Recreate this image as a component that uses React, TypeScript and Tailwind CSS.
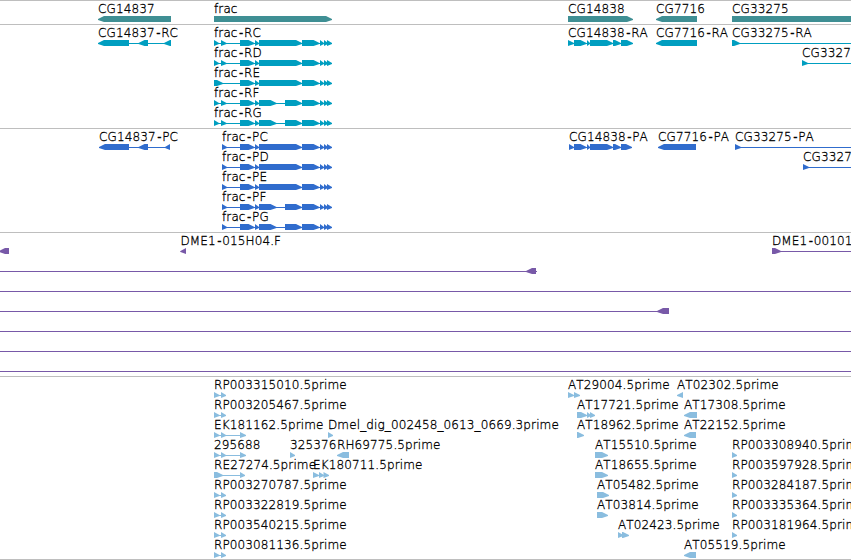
import React from 'react';

type Direction = 'left' | 'right';

interface Feature {
  label?: string;
  dir: Direction;
  // [start, end] of each block
  blocks: number[][];
  line?: number[];
}

interface Track {
  name: string;
  color: string;
  rows: Feature[][];
}

const WIDTH = 851;

const gene = (label: string, dir: Direction, blocks: number[][], line?: number[]): Feature => ({
  label,
  dir,
  blocks,
  line,
});

const connector = (start: number, end: number, blocks: number[][] = []): Feature => ({
  dir: 'left',
  blocks,
  line: [start, end],
});

const fracTail = [[302, 319.5], [320, 324], [324, 328], [327, 332]];
const fracLong = [[240, 254.5], [255, 259], [259, 302], ...fracTail];
const fracSplit = [[240, 254.5], [255, 259], [259, 276.5], [285, 302], ...fracTail];
const fracStart = [[214, 219], [221, 226.5]];
const cg14838 = [[574, 586.5], [587, 590], [590, 613], [613, 621]];
const estPair = [[214, 219.5], [221, 226]];

const tracks: Track[] = [
  {
    name: 'genes',
    color: '#3f8f94',
    rows: [
      [
        gene('CG14837', 'left', [[98, 171]]),
        gene('frac', 'right', [[214, 332]]),
        gene('CG14838', 'right', [[568, 633]]),
        gene('CG7716', 'left', [[656, 697]]),
        gene('CG33275', 'right', [[732, 870]]),
      ],
    ],
  },
  {
    name: 'transcripts',
    color: '#009ec0',
    rows: [
      [
        gene('CG14837-RC', 'left', [[98, 129], [138.5, 148], [164, 171]]),
        gene('frac-RC', 'right', [...fracStart, ...fracLong]),
        gene('CG14838-RA', 'right', [[568, 574], ...cg14838, [621, 633]]),
        gene('CG7716-RA', 'left', [[656, 697]]),
        gene('CG33275-RA', 'right', [[732, 740]], [732, 851]),
      ],
      [
        gene('frac-RD', 'right', [...fracStart, ...fracLong]),
        gene('CG3327', 'right', [[802, 808]], [802, 851]),
      ],
      [gene('frac-RE', 'right', [[214, 223], ...fracLong])],
      [gene('frac-RF', 'right', [...fracStart, ...fracSplit])],
      [gene('frac-RG', 'right', [...fracStart, ...fracSplit])],
    ],
  },
  {
    name: 'proteins',
    color: '#306ccd',
    rows: [
      [
        gene('CG14837-PC', 'left', [[99, 129], [138.5, 148], [165, 170]]),
        gene('frac-PC', 'right', [[222, 227], ...fracLong]),
        gene('CG14838-PA', 'right', [[569, 574], ...cg14838, [621, 632]]),
        gene('CG7716-PA', 'left', [[658, 696]]),
        gene('CG33275-PA', 'right', [[735, 741]], [735, 851]),
      ],
      [
        gene('frac-PD', 'right', [[222, 227], ...fracLong]),
        gene('CG3327', 'right', [[803, 809]], [803, 851]),
      ],
      [gene('frac-PE', 'right', [[222, 227], ...fracLong])],
      [gene('frac-PF', 'right', [[222, 227], ...fracSplit])],
      [gene('frac-PG', 'right', [[222, 227], ...fracSplit])],
    ],
  },
  {
    name: 'clones',
    color: '#7859a8',
    rows: [
      [
        connector(0, 4, [[-1, 9]]),
        gene('DME1-015H04.F', 'left', [[180.5, 186]]),
        gene('DME1-00101', 'right', [[772, 781]], [772, 851]),
      ],
      [connector(0, 537, [[526, 536]])],
      [connector(0, 851)],
      [connector(0, 669, [[657, 669]])],
      [connector(0, 851)],
      [connector(0, 851)],
      [connector(0, 851)],
    ],
  },
  {
    name: 'ests',
    color: '#8abddf',
    rows: [
      [
        gene('RP003315010.5prime', 'right', estPair),
        gene('AT29004.5prime', 'right', [[568, 574], [574, 580]]),
        gene('AT02302.5prime', 'left', [[677, 683]]),
      ],
      [
        gene('RP003205467.5prime', 'right', estPair),
        gene('AT17721.5prime', 'right', [[577, 587], [587, 591], [590, 595]]),
        gene('AT17308.5prime', 'left', [[684, 697]]),
      ],
      [
        gene('EK181162.5prime', 'right', [...estPair, [240, 246]]),
        gene('Dmel_dig_002458_0613_0669.3prime', 'right', [[328, 333]]),
        gene('AT18962.5prime', 'right', [[577, 584]]),
        gene('AT22152.5prime', 'left', [[684, 696]]),
      ],
      [
        gene('295688', 'right', [...estPair, [240, 246]]),
        gene('325376', 'right', [[290, 295]]),
        gene('RH69775.5prime', 'left', [[337, 349]]),
        gene('AT15510.5prime', 'right', [[595, 608]]),
        gene('RP003308940.5prime', 'right', [[732, 737]]),
      ],
      [
        gene('RE27274.5prime', 'right', [[214, 223], [240, 245]]),
        gene('EK180711.5prime', 'right', [[313, 319], [319, 324], [323.5, 329]]),
        gene('AT18655.5prime', 'right', [[595, 608]]),
        gene('RP003597928.5prime', 'right', [[732, 737]]),
      ],
      [
        gene('RP003270787.5prime', 'right', estPair),
        gene('AT05482.5prime', 'right', [[597, 609]]),
        gene('RP003284187.5prime', 'right', [[732, 737]]),
      ],
      [
        gene('RP003322819.5prime', 'right', estPair),
        gene('AT03814.5prime', 'right', [[597, 608]]),
        gene('RP003335364.5prime', 'right', [[732, 737]]),
      ],
      [
        gene('RP003540215.5prime', 'right', estPair),
        gene('AT02423.5prime', 'right', [[618, 623.5], [622, 629]]),
        gene('RP003181964.5prime', 'right', [[732, 737]]),
      ],
      [
        gene('RP003081136.5prime', 'right', estPair),
        gene('AT05519.5prime', 'left', [[684, 696]]),
      ],
    ],
  },
];

// Block with a pointed end, 6px tall
const blockPoints = ([start, end]: number[], dir: Direction) => {
  const head = Math.min(6, end - start);
  if (dir === 'right') {
    const neck = end - head;
    return `${start},0 ${neck},0 ${end},3 ${end},4 ${neck},6 ${start},6`;
  }
  const neck = start + head;
  return `${end},0 ${neck},0 ${start},3 ${start},4 ${neck},6 ${end},6`;
};

const Label: React.FC<{ text: string; x: number }> = ({ text, x }) => {
  const [name, suffix] = text.split('-');
  return (
    <span
      className="absolute top-0 whitespace-pre text-[12px] font-extralight leading-4 tracking-[0.12px] text-black [font-kerning:none] [-webkit-text-stroke:0.3px_#000]"
      style={{ left: x }}
    >
      {name}
      {suffix && (
        <>
          <span className="font-['DejaVu_Sans_Mono',monospace] leading-none tracking-[-0.8px]">-</span>
          {suffix}
        </>
      )}
    </span>
  );
};

const FeatureRow: React.FC<{ features: Feature[]; color: string }> = ({ features, color }) => (
  <div className="relative h-5 w-[851px] shrink-0">
    {features.map((f, i) => (f.label ? <Label key={i} text={f.label} x={f.blocks[0][0]} /> : null))}
    <svg className="absolute left-0 top-[15px]" width={WIDTH} height={6} fill={color}>
      {features.map((f, i) => {
        const line = f.line ?? [f.blocks[0][0], f.blocks[f.blocks.length - 1][1]];
        return (
          <g key={i}>
            <rect x={line[0]} y={3} width={line[1] - line[0]} height={1} />
            {f.blocks.map((b, j) => (
              <polygon key={j} points={blockPoints(b, f.dir)} />
            ))}
          </g>
        );
      })}
    </svg>
  </div>
);

export default function App() {
  return (
    <div className="flex h-[560px] w-[851px] flex-col overflow-hidden bg-white font-['DejaVu_Sans',sans-serif]">
      {tracks.map((track) => (
        <section
          key={track.name}
          className="shrink-0 border-t border-[#bebebe] pb-[3px] last:h-[184px] last:border-b last:pb-0"
        >
          {track.rows.map((features, i) => (
            <FeatureRow key={i} features={features} color={track.color} />
          ))}
        </section>
      ))}
    </div>
  );
}
